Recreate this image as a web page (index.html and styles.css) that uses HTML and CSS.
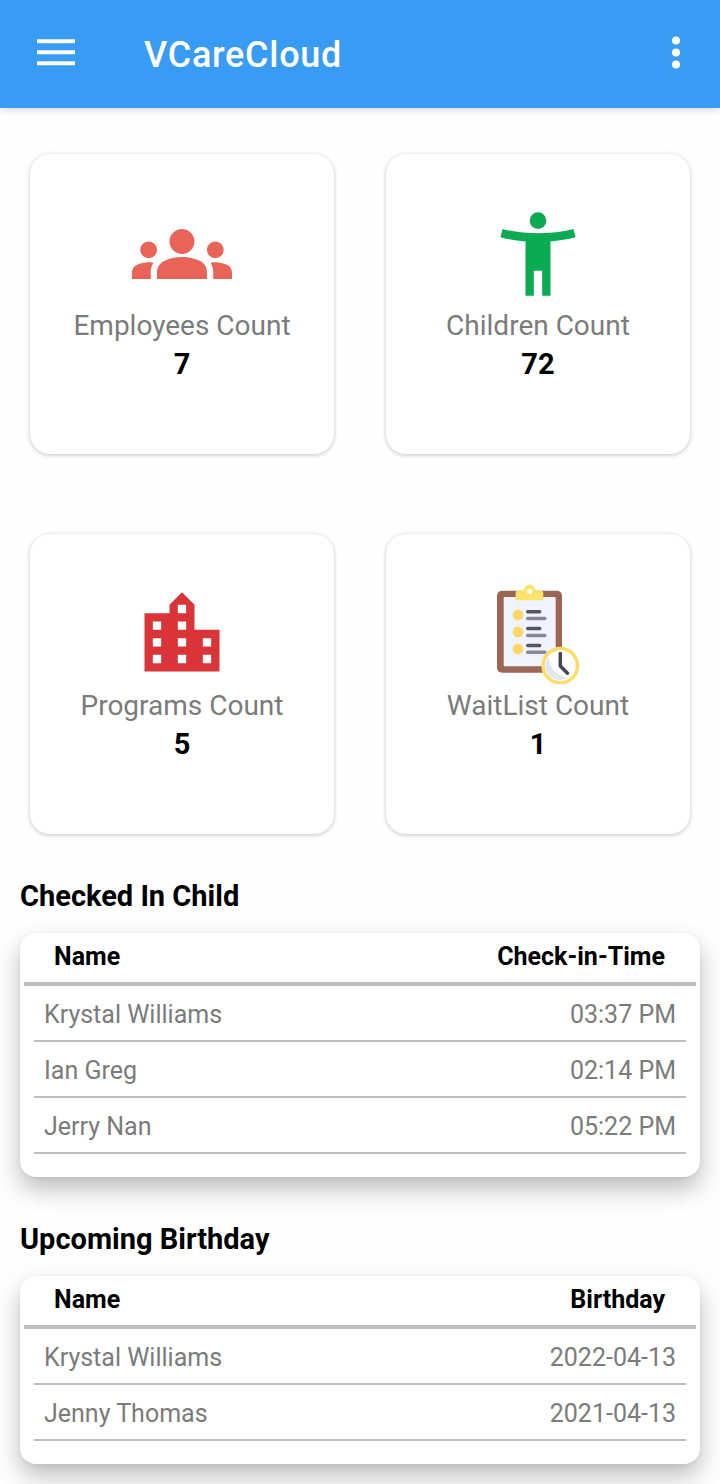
FILE: index.html
```html
<!DOCTYPE html>
<html lang="en">
<head>
  <meta charset="UTF-8">
  <meta name="viewport" content="width=device-width, initial-scale=1.0">
  <title>VCareCloud</title>
  <link rel="stylesheet" href="styles.css">
</head>
<body>
  <header class="toolbar">
    <svg class="menu-icon" viewBox="0 0 38 28">
      <path d="M0 2.2h38M0 13.2h38M0 24.2h38" stroke="#fff" stroke-width="4"/>
    </svg>
    <h1>VCareCloud</h1>
    <svg class="more-icon" viewBox="0 0 8 34" fill="#fff">
      <circle cx="4" cy="4.5" r="4"/>
      <circle cx="4" cy="16.5" r="4"/>
      <circle cx="4" cy="28.5" r="4"/>
    </svg>
  </header>

  <main>
    <section class="cards">
      <div class="card">
        <svg class="card-icon" viewBox="0 0 24 24" fill="#e96458">
          <path d="M12 12.75c1.63 0 3.07.39 4.24.9 1.08.48 1.76 1.56 1.76 2.73V18H6v-1.61c0-1.18.68-2.26 1.76-2.73 1.17-.52 2.61-.91 4.24-.91zM4 13c1.1 0 2-.9 2-2s-.9-2-2-2-2 .9-2 2 .9 2 2 2zm1.13 1.1C4.76 14.04 4.39 14 4 14c-.99 0-1.93.21-2.78.58C.48 14.9 0 15.62 0 16.43V18h4.5v-1.61c0-.83.23-1.61.63-2.29zM20 13c1.1 0 2-.9 2-2s-.9-2-2-2-2 .9-2 2 .9 2 2 2zm4 3.43c0-.81-.48-1.53-1.22-1.85C21.93 14.21 20.99 14 20 14c-.39 0-.76.04-1.13.1.4.68.63 1.46.63 2.29V18H24v-1.57zM12 6c1.66 0 3 1.34 3 3s-1.34 3-3 3-3-1.34-3-3 1.34-3 3-3z"/>
        </svg>
        <p class="label">Employees Count</p>
        <p class="count">7</p>
      </div>
      <div class="card">
        <svg class="card-icon" viewBox="0 0 24 24" fill="#0bab54">
          <circle cx="12" cy="4" r="2"/>
          <path d="M20.5 6c-2.61.7-5.67 1-8.5 1s-5.89-.3-8.5-1L3 8c1.86.5 4 .83 6 1v13h2v-6h2v6h2V9c2-.17 4.14-.5 6-1l-.5-2z"/>
        </svg>
        <p class="label">Children Count</p>
        <p class="count">72</p>
      </div>
      <div class="card">
        <svg class="card-icon" viewBox="0 0 24 24" fill="#d93438">
          <path d="M15 11V5l-3-3-3 3v2H3v14h18V11h-6zm-8 8H5v-2h2v2zm0-4H5v-2h2v2zm0-4H5V9h2v2zm6 8h-2v-2h2v2zm0-4h-2v-2h2v2zm0-4h-2V9h2v2zm0-4h-2V5h2v2zm6 12h-2v-2h2v2zm0-4h-2v-2h2v2z"/>
        </svg>
        <p class="label">Programs Count</p>
        <p class="count">5</p>
      </div>
      <div class="card">
        <svg class="card-icon" viewBox="0 0 100 100">
          <rect x="9" y="6.7" width="65" height="82" rx="5" fill="#9b6652"/>
          <rect x="15.7" y="13" width="52" height="69.3" rx="1" fill="#f1f3fc"/>
          <path d="M27.7 16.2V9q0-2.5 2.5-2.5h4C36.5 6.5 36.8.5 41.6.5S46.7 6.5 49 6.5h4q2.3 0 2.3 2.5v7.2z" fill="#fee26c"/>
          <circle cx="41.7" cy="7.2" r="2.7" fill="#fffdf0"/>
          <g fill="#ffd766">
            <circle cx="30" cy="31" r="5.4"/>
            <circle cx="30" cy="48" r="5.4"/>
            <circle cx="30" cy="65" r="5.4"/>
          </g>
          <path d="M39.7 27.7h12M39.7 44.6h12M39.7 61.6h12" stroke="#565564" stroke-width="3.5" stroke-linecap="round"/>
          <path d="M39.7 34.4h17.2M39.7 51.4h17.2M39.7 68.3h17.2" stroke="#878797" stroke-width="3.5" stroke-linecap="round"/>
          <circle cx="72.3" cy="81.7" r="17.2" fill="#fff" stroke="#ffdc67" stroke-width="3.5"/>
          <path d="M61 73a14 14 0 0 0 19 20.3A20 20 0 0 1 61 73z" fill="#dfe7f2"/>
          <path d="M72.3 69.5v12.5l7.2 7.2" fill="none" stroke="#454552" stroke-width="3.5" stroke-linecap="round" stroke-linejoin="round"/>
        </svg>
        <p class="label">WaitList Count</p>
        <p class="count">1</p>
      </div>
    </section>

    <h2>Checked In Child</h2>
    <div class="list">
      <div class="list-header"><span>Name</span><span>Check-in-Time</span></div>
      <div class="list-row"><span>Krystal Williams</span><span>03:37 PM</span></div>
      <div class="list-row"><span>Ian Greg</span><span>02:14 PM</span></div>
      <div class="list-row"><span>Jerry Nan</span><span>05:22 PM</span></div>
    </div>

    <h2>Upcoming Birthday</h2>
    <div class="list">
      <div class="list-header"><span>Name</span><span>Birthday</span></div>
      <div class="list-row"><span>Krystal Williams</span><span>2022-04-13</span></div>
      <div class="list-row"><span>Jenny Thomas</span><span>2021-04-13</span></div>
    </div>
  </main>
</body>
</html>
```
FILE: styles.css
```css
* {
  box-sizing: border-box;
}
body {
  font-family: Roboto, sans-serif;
  margin: 0;
  padding-bottom: 20px;
  background-color: #fefefe;
  color: #000;
}
h1, h2, p {
  margin: 0;
}
.toolbar {
  display: flex;
  align-items: center;
  height: 108px;
  padding: 0 40px 2px 37px;
  background-color: #389bf4;
  box-shadow: 0 1px 8px rgba(0, 0, 0, 0.2);
}
.menu-icon {
  width: 38px;
  height: 28px;
  margin-top: -1px;
}
.toolbar h1 {
  flex: 1;
  margin-left: 69px;
  padding-top: 4px;
  font-size: 36px;
  font-weight: 500;
  letter-spacing: 0.7px;
  color: #fff;
}
.more-icon {
  width: 8px;
  height: 34px;
}
.cards {
  display: grid;
  grid-template-columns: 304px 304px;
  gap: 80px 52px;
  padding: 46px 30px 0;
}
.card {
  display: flex;
  flex-direction: column;
  align-items: center;
  height: 300px;
  padding-top: 50px;
  border-radius: 20px;
  background-color: #fff;
  box-shadow: 0 1px 4px rgba(0, 0, 0, 0.24);
}
.card-icon {
  width: 100px;
  height: 100px;
}
.label {
  margin-top: 3px;
  font-size: 28px;
  line-height: 38px;
  color: #7b7b7b;
}
.count {
  font-size: 29px;
  font-weight: 700;
  line-height: 38px;
}
h2 {
  margin: 43px 0 18px 20px;
  font-size: 29px;
  font-weight: 700;
  line-height: 38px;
}
.list {
  margin: 0 20px;
  padding-bottom: 23px;
  border-radius: 16px;
  background-color: #fff;
  box-shadow: 0 12px 24px rgba(0, 0, 0, 0.26), 0 1px 4px rgba(0, 0, 0, 0.06);
}
.list-header,
.list-row {
  display: flex;
  justify-content: space-between;
}
.list-header {
  height: 53px;
  margin: 0 4px;
  padding: 0 31px 0 30px;
  border-bottom: 4px solid #bebebe;
  font-size: 25px;
  font-weight: 700;
  line-height: 48px;
}
.list-row {
  height: 56px;
  margin: 0 14px;
  padding: 0 10px;
  border-bottom: 2px solid #bebebe;
  font-size: 25px;
  line-height: 57px;
  color: #7b7b7b;
}
```
